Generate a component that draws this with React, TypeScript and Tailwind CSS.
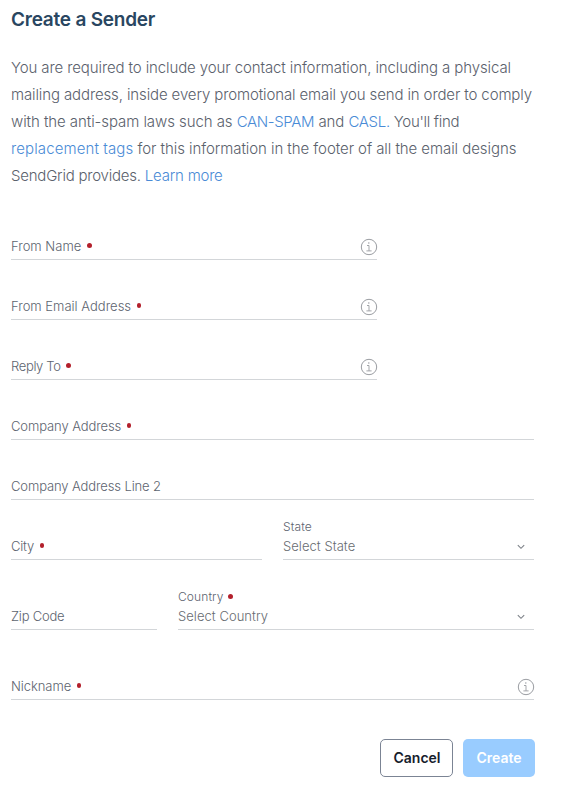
import type { ReactNode } from "react";

function InfoIcon() {
  return (
    <svg className="-mr-px mb-[3px] h-[18px] w-[18px] shrink-0" viewBox="0 0 18 18" fill="none" stroke="#9a9da2" strokeWidth="1">
      <circle cx="9" cy="9" r="7.7" />
      <path d="M7 7.5h2v5.4M6.4 12.9h5.2" strokeWidth="0.9" />
      <circle cx="8.8" cy="5" r="0.75" fill="#9a9da2" stroke="none" />
    </svg>
  );
}

function Chevron() {
  return (
    <svg className="mr-[9px] mb-[9px] h-[6px] w-[8px] shrink-0" viewBox="0 0 8 6" fill="none" stroke="#7c8087" strokeWidth="1.1">
      <path d="M0.8 1.2 4 4.3 7.2 1.2" />
    </svg>
  );
}

function Dot({ className = "ml-[5.5px]" }: { className?: string }) {
  return <span className={`inline-block h-[4.8px] w-[4.8px] rounded-full bg-[#b3202c] ${className}`} />;
}

type FieldProps = {
  label: string;
  required?: boolean;
  info?: boolean;
  tracking?: string;
  className?: string;
};

function Field({ label, required, info, tracking = "", className = "" }: FieldProps) {
  return (
    <div className={`flex h-[34px] items-end justify-between border-b border-[#d3d6d9] ${className}`}>
      <label className="flex h-[27px] items-center whitespace-nowrap text-[13px] leading-[20px] font-light text-[#5d646f]">
        <span className={tracking}>{label}</span>
        {required && <Dot />}
      </label>
      {info && <InfoIcon />}
    </div>
  );
}

function SelectField({ label, value, required, className = "" }: { label: string; value: string; required?: boolean; className?: string }) {
  return (
    <div className={`flex h-[44px] items-end justify-between border-b border-[#d3d6d9] ${className}`}>
      <div className="whitespace-nowrap font-light">
        <div className="flex h-[14px] items-center text-[12px] text-[#5d646f]">
          <span className="tracking-[0.1px]">{label}</span>
          {required && <Dot className="-mt-px ml-[4.5px]" />}
        </div>
        <div className="flex h-[25px] items-center text-[13px] text-[#686c71]">
          <span className="tracking-[0.04px]">{value}</span>
        </div>
      </div>
      <Chevron />
    </div>
  );
}

function Link({ children, className = "" }: { children: ReactNode; className?: string }) {
  return <a className={`text-[#4a8bd6] ${className}`}>{children}</a>;
}

export default function App() {
  return (
    <main className="h-[788px] w-[578px] overflow-hidden bg-white pl-[11px] font-['Inter','Liberation_Sans',sans-serif]">
      <h1 className="pt-[6px] text-[19px] leading-[28px] font-semibold tracking-[-0.23px] whitespace-nowrap text-[#294661]">
        <span>Create a Sender</span>
      </h1>
      <p className="mt-[20px] text-[15px] leading-[27px] font-light whitespace-nowrap text-[#5a616c]">
        <span className="block w-fit tracking-[-0.107px]">You are required to include your contact information, including a physical</span>
        <span className="block w-fit tracking-[-0.12px]">mailing address, inside every promotional email you send in order to comply</span>
        <span className="block w-fit tracking-[-0.07px]">with the anti-spam laws such as <Link className="tracking-[-0.35px]">CAN-SPAM</Link> and <Link className="tracking-[-0.3px]">CASL.</Link><span className="tracking-[-0.3px]"> You'll find</span></span>
        <span className="block w-fit tracking-[-0.065px]"><Link className="tracking-[0.11px]">replacement tags</Link> for this information in the footer of all the email designs</span>
        <span className="block w-fit tracking-[-0.22px]">SendGrid provides. <Link>Learn more</Link></span>
      </p>
      <form className="mt-[37px] w-[523px]">
        <Field label="From Name" required info className="w-[366px]" />
        <Field label="From Email Address" required info className="mt-[26px] w-[366px]" />
        <Field label="Reply To" required info tracking="tracking-[-0.35px]" className="mt-[26px] w-[366px]" />
        <Field label="Company Address" required tracking="tracking-[-0.1px]" className="mt-[26px]" />
        <Field label="Company Address Line 2" tracking="tracking-[-0.12px]" className="mt-[26px]" />
        <div className="mt-[16px] flex items-end justify-between">
          <Field label="City" required tracking="tracking-[-0.2px]" className="w-[251px]" />
          <SelectField label="State" value="Select State" className="w-[251px]" />
        </div>
        <div className="mt-[26px] flex items-end justify-between">
          <Field label="Zip Code" tracking="tracking-[-0.22px]" className="w-[146px]" />
          <SelectField label="Country" value="Select Country" required className="w-[356px]" />
        </div>
        <Field label="Nickname" required info tracking="tracking-[-0.07px]" className="mt-[36px]" />
        <div className="-mr-px mt-[39px] flex justify-end gap-[10px] text-[14px] font-semibold">
          <button type="button" className="h-[38px] w-[73px] rounded-[5px] border border-[#7b8494] pb-px pl-px text-[#16202c]">Cancel</button>
          <button type="button" className="h-[38px] w-[72px] rounded-[5px] bg-[#99ccff] pb-px text-white">Create</button>
        </div>
      </form>
    </main>
  );
}
